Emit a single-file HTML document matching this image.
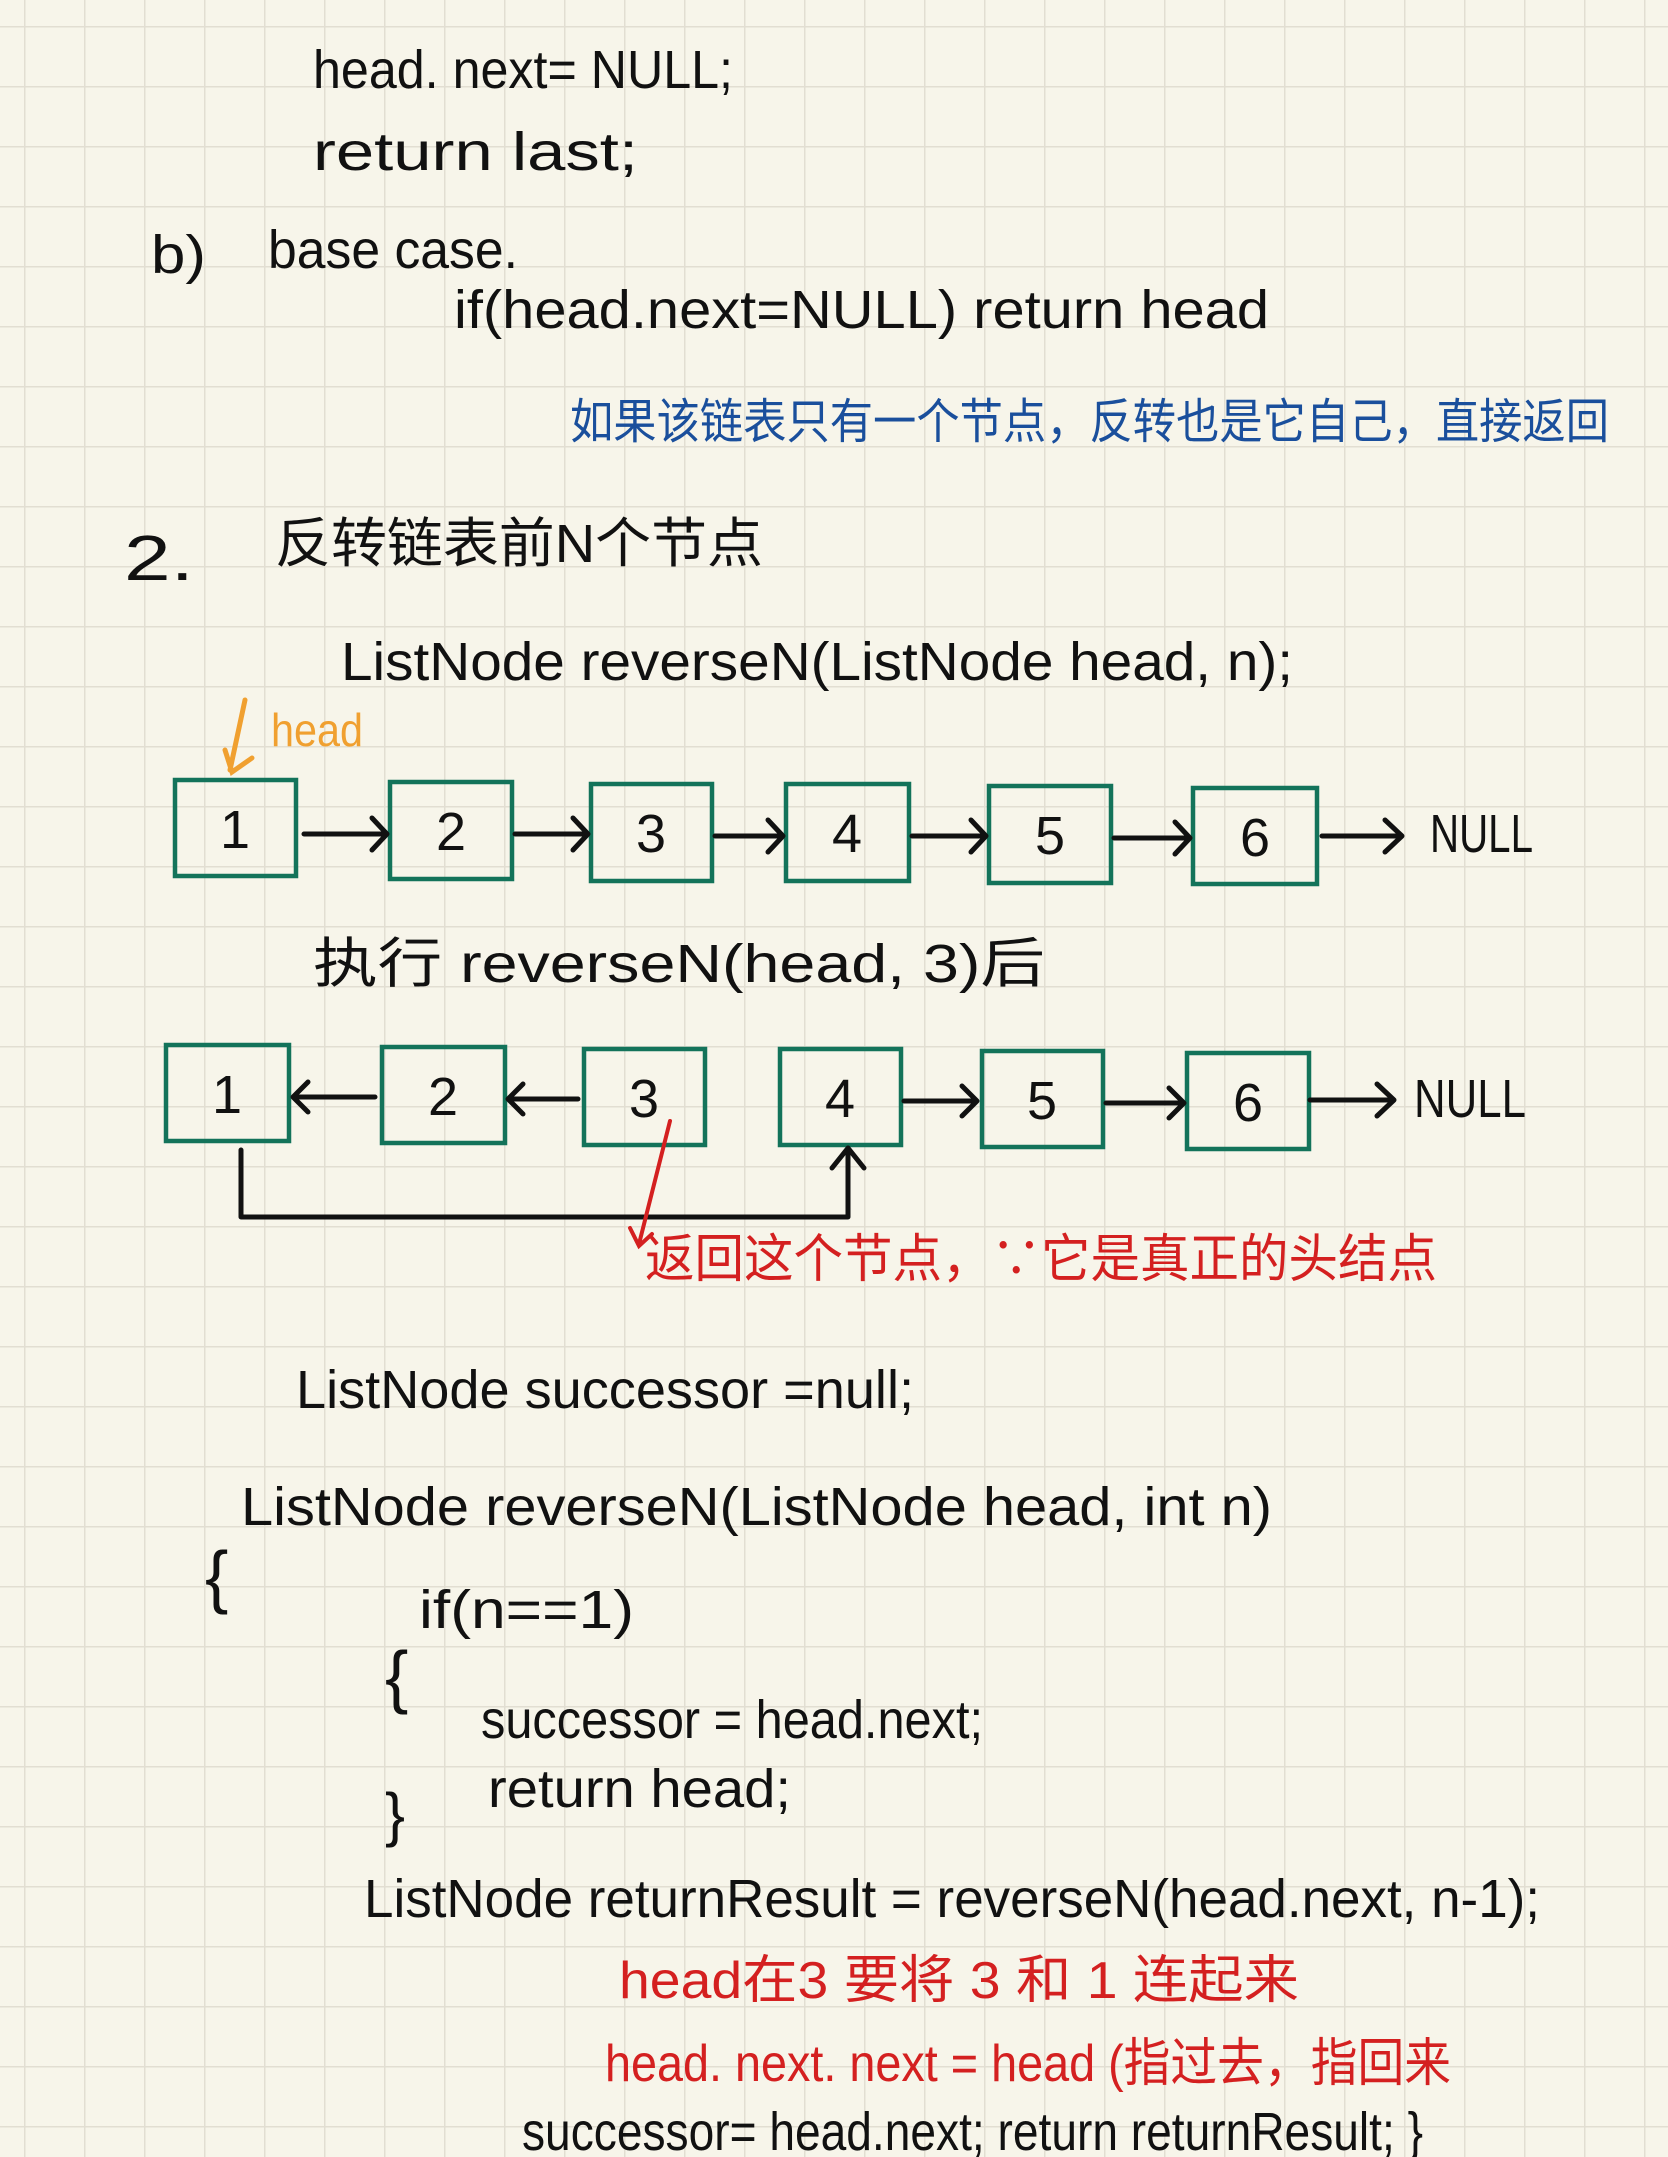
<!DOCTYPE html>
<html><head><meta charset="utf-8"><style>
html,body{margin:0;padding:0;background:#f7f5ea}
svg{display:block}
text{font-family:"Liberation Sans","Noto Sans CJK SC",sans-serif}
</style></head><body>
<svg width="1668" height="2157" viewBox="0 0 1668 2157" xmlns="http://www.w3.org/2000/svg">
<defs>
<pattern id="g" x="24" y="26" width="60" height="60" patternUnits="userSpaceOnUse">
<path d="M0 0V60M0 0H60" stroke="#e2ded2" stroke-width="3" fill="none"/>
</pattern>
</defs>
<rect width="1668" height="2157" fill="#f7f5ea"/>
<rect width="1668" height="2157" fill="url(#g)"/>
<g fill="#111" font-size="54">
<text x="313" y="88" textLength="420" lengthAdjust="spacingAndGlyphs">head. next= NULL;</text>
<text x="313" y="170" textLength="325" lengthAdjust="spacingAndGlyphs">return  last;</text>
<text x="151" y="273" textLength="55" lengthAdjust="spacingAndGlyphs">b)</text>
<text x="268" y="268" textLength="250" lengthAdjust="spacingAndGlyphs">base  case.</text>
<text x="454" y="328" textLength="815" lengthAdjust="spacingAndGlyphs">if(head.next=NULL)  return  head</text>
<text x="124" y="580" font-size="64" textLength="70" lengthAdjust="spacingAndGlyphs">2.</text>
<text x="275" y="562" textLength="488" lengthAdjust="spacingAndGlyphs">反转链表前N个节点</text>
<text x="341" y="680" textLength="952" lengthAdjust="spacingAndGlyphs">ListNode  reverseN(ListNode  head,  n);</text>
<text x="313" y="982" textLength="732" lengthAdjust="spacingAndGlyphs">执行   reverseN(head, 3)后</text>
<text x="296" y="1408" textLength="618" lengthAdjust="spacingAndGlyphs">ListNode  successor  =null;</text>
<text x="241" y="1525" textLength="1031" lengthAdjust="spacingAndGlyphs">ListNode  reverseN(ListNode  head,  int n)</text>
<text x="205" y="1600" font-size="70">{</text>
<text x="419" y="1628" textLength="215" lengthAdjust="spacingAndGlyphs">if(n==1)</text>
<text x="385" y="1700" font-size="70">{</text>
<text x="481" y="1738" textLength="502" lengthAdjust="spacingAndGlyphs">successor = head.next;</text>
<text x="488" y="1807" textLength="303" lengthAdjust="spacingAndGlyphs">return  head;</text>
<text x="385" y="1835" font-size="60">}</text>
<text x="364" y="1917" textLength="1176" lengthAdjust="spacingAndGlyphs">ListNode  returnResult = reverseN(head.next, n-1);</text>
<text x="522" y="2150" textLength="901" lengthAdjust="spacingAndGlyphs">successor= head.next;   return returnResult; }</text>
</g>
<text x="570" y="438" font-size="48" fill="#1a4f9c" textLength="1039" lengthAdjust="spacingAndGlyphs">如果该链表只有一个节点，反转也是它自己，直接返回</text>
<text x="271" y="746" font-size="46" fill="#f0a030" textLength="92" lengthAdjust="spacingAndGlyphs">head</text>
<path d="M245 700 L230 770 M225 750 L232 772 L252 758" stroke="#f0a030" stroke-width="5" fill="none" stroke-linecap="round"/>
<g fill="none" stroke="#13735a" stroke-width="4.5">
<rect x="175" y="780" width="121" height="96"/>
<rect x="390" y="782" width="122" height="97"/>
<rect x="591" y="784" width="121" height="97"/>
<rect x="786" y="784" width="123" height="97"/>
<rect x="989" y="786" width="122" height="97"/>
<rect x="1193" y="788" width="124" height="96"/>
<rect x="166" y="1045" width="123" height="96"/>
<rect x="382" y="1047" width="123" height="96"/>
<rect x="584" y="1049" width="121" height="96"/>
<rect x="780" y="1049" width="121" height="96"/>
<rect x="982" y="1051" width="121" height="96"/>
<rect x="1187" y="1053" width="122" height="96"/>
</g>
<g fill="#111" font-size="54" text-anchor="middle">
<text x="235" y="848">1</text><text x="451" y="850">2</text><text x="651" y="852">3</text>
<text x="847" y="852">4</text><text x="1050" y="854">5</text><text x="1255" y="856">6</text>
<text x="227" y="1113">1</text><text x="443" y="1115">2</text><text x="644" y="1117">3</text>
<text x="840" y="1117">4</text><text x="1042" y="1119">5</text><text x="1248" y="1121">6</text>
<text x="1430" y="852" text-anchor="start" textLength="103" lengthAdjust="spacingAndGlyphs">NULL</text>
<text x="1414" y="1117" text-anchor="start" textLength="112" lengthAdjust="spacingAndGlyphs">NULL</text>
</g>
<g fill="none" stroke="#111" stroke-width="5" stroke-linecap="round" stroke-linejoin="round">
<path d="M304 834H385M372 818L387 834L372 850"/>
<path d="M515 834H586M573 818L588 834L573 850"/>
<path d="M715 836H781M768 820L783 836L768 852"/>
<path d="M912 836H984M971 820L986 836L971 852"/>
<path d="M1114 838H1188M1175 822L1190 838L1175 854"/>
<path d="M1322 836H1400M1385 820L1402 836L1385 852"/>
<path d="M375 1097H295M308 1082L293 1097L308 1112"/>
<path d="M578 1099H510M523 1084L508 1099L523 1114"/>
<path d="M904 1101H975M962 1086L977 1101L962 1116"/>
<path d="M1106 1103H1182M1169 1088L1184 1103L1169 1118"/>
<path d="M1310 1100H1392M1377 1084L1394 1100L1377 1116"/>
<path d="M241 1150V1217H848V1150M832 1168L848 1148L864 1168"/>
</g>
<path d="M670 1121L639 1244M630 1228L639 1246L652 1234" stroke="#d42020" stroke-width="4" fill="none" stroke-linecap="round"/>
<g fill="#d42020" font-size="52">
<text x="645" y="1277" textLength="792" lengthAdjust="spacingAndGlyphs">返回这个节点，∵它是真正的头结点</text>
<text x="619" y="1998" textLength="680" lengthAdjust="spacingAndGlyphs">head在3  要将 3 和 1 连起来</text>
<text x="605" y="2081" textLength="846" lengthAdjust="spacingAndGlyphs">head. next. next = head (指过去，指回来</text>
</g>
</svg>
</body></html>
